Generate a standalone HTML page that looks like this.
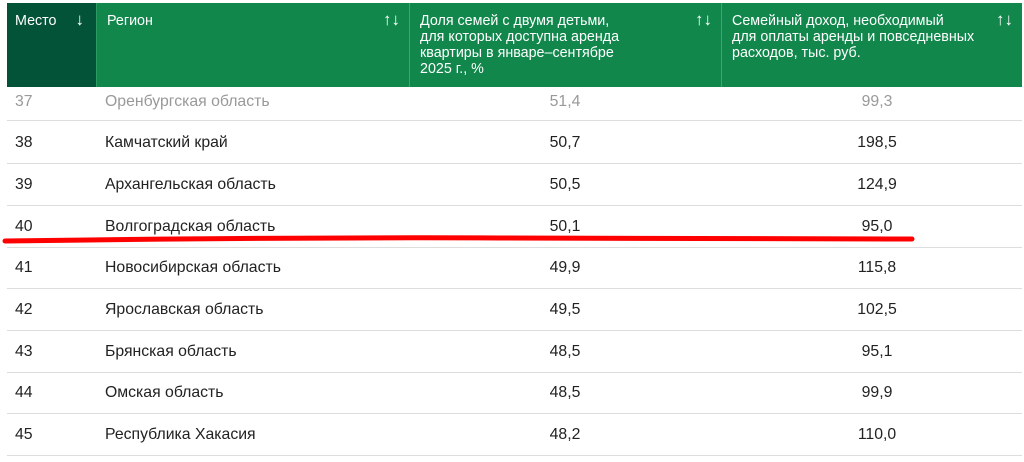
<!DOCTYPE html>
<html><head><meta charset="utf-8"><style>
body{margin:0;width:1024px;height:462px;background:#fff;overflow:hidden;position:relative;font-family:"Liberation Sans",sans-serif}
.h{position:absolute;top:3px;height:84px;background:#11874c;color:#fff;font-size:14.3px;line-height:16px;box-sizing:border-box;padding:10px 10px}
.h .s{position:absolute;right:9px;top:9px;font-size:17px}
.r{position:absolute;left:7px;width:1015px;height:42px;border-bottom:1px solid #ddd;font-size:15.8px;color:#222}
.r span{position:absolute;top:13px}
.c1{left:8px}.c2{left:98px}.c3{left:402px;width:312px;text-align:center}.c4{left:714px;width:312px;text-align:center}
</style></head><body>
<div class="h" style="left:7px;width:89px;background:#035338;padding-left:8px">Место<span class="s" style="right:12px">↓</span></div>
<div class="h" style="left:96px;width:313px;border-left:1px solid #2e9a63">Регион<span class="s">↑↓</span></div>
<div class="h" style="left:409px;width:312px;border-left:1px solid #3ea66f">Доля семей с двумя детьми,<br>для которых доступна аренда<br>квартиры в январе–сентябре<br>2025 г., %<span class="s">↑↓</span></div>
<div class="h" style="left:721px;width:301px;border-left:1px solid #3ea66f">Семейный доход, необходимый<br>для оплаты аренды и повседневных<br>расходов, тыс. руб.<span class="s">↑↓</span></div>
<div class="r" style="top:87px;height:33px;color:#999"><span class="c1" style="top:6px">37</span><span class="c2" style="top:6px">Оренбургская область</span><span class="c3" style="top:6px">51,4</span><span class="c4" style="top:6px">99,3</span></div>
<div class="r" style="top:121px"><span class="c1">38</span><span class="c2">Камчатский край</span><span class="c3">50,7</span><span class="c4">198,5</span></div>
<div class="r" style="top:163px"><span class="c1">39</span><span class="c2">Архангельская область</span><span class="c3">50,5</span><span class="c4">124,9</span></div>
<div class="r" style="top:205px"><span class="c1">40</span><span class="c2">Волгоградская область</span><span class="c3">50,1</span><span class="c4">95,0</span></div>
<div class="r" style="top:246px"><span class="c1">41</span><span class="c2">Новосибирская область</span><span class="c3">49,9</span><span class="c4">115,8</span></div>
<div class="r" style="top:288px"><span class="c1">42</span><span class="c2">Ярославская область</span><span class="c3">49,5</span><span class="c4">102,5</span></div>
<div class="r" style="top:330px"><span class="c1">43</span><span class="c2">Брянская область</span><span class="c3">48,5</span><span class="c4">95,1</span></div>
<div class="r" style="top:371px"><span class="c1">44</span><span class="c2">Омская область</span><span class="c3">48,5</span><span class="c4">99,9</span></div>
<div class="r" style="top:413px"><span class="c1">45</span><span class="c2">Республика Хакасия</span><span class="c3">48,2</span><span class="c4">110,0</span></div>
<svg style="position:absolute;left:0;top:0" width="1024" height="462"><path d="M5 241 Q300 237 500 238 T912 239" stroke="#f00" stroke-width="5" fill="none" stroke-linecap="round"/></svg>
</body></html>
